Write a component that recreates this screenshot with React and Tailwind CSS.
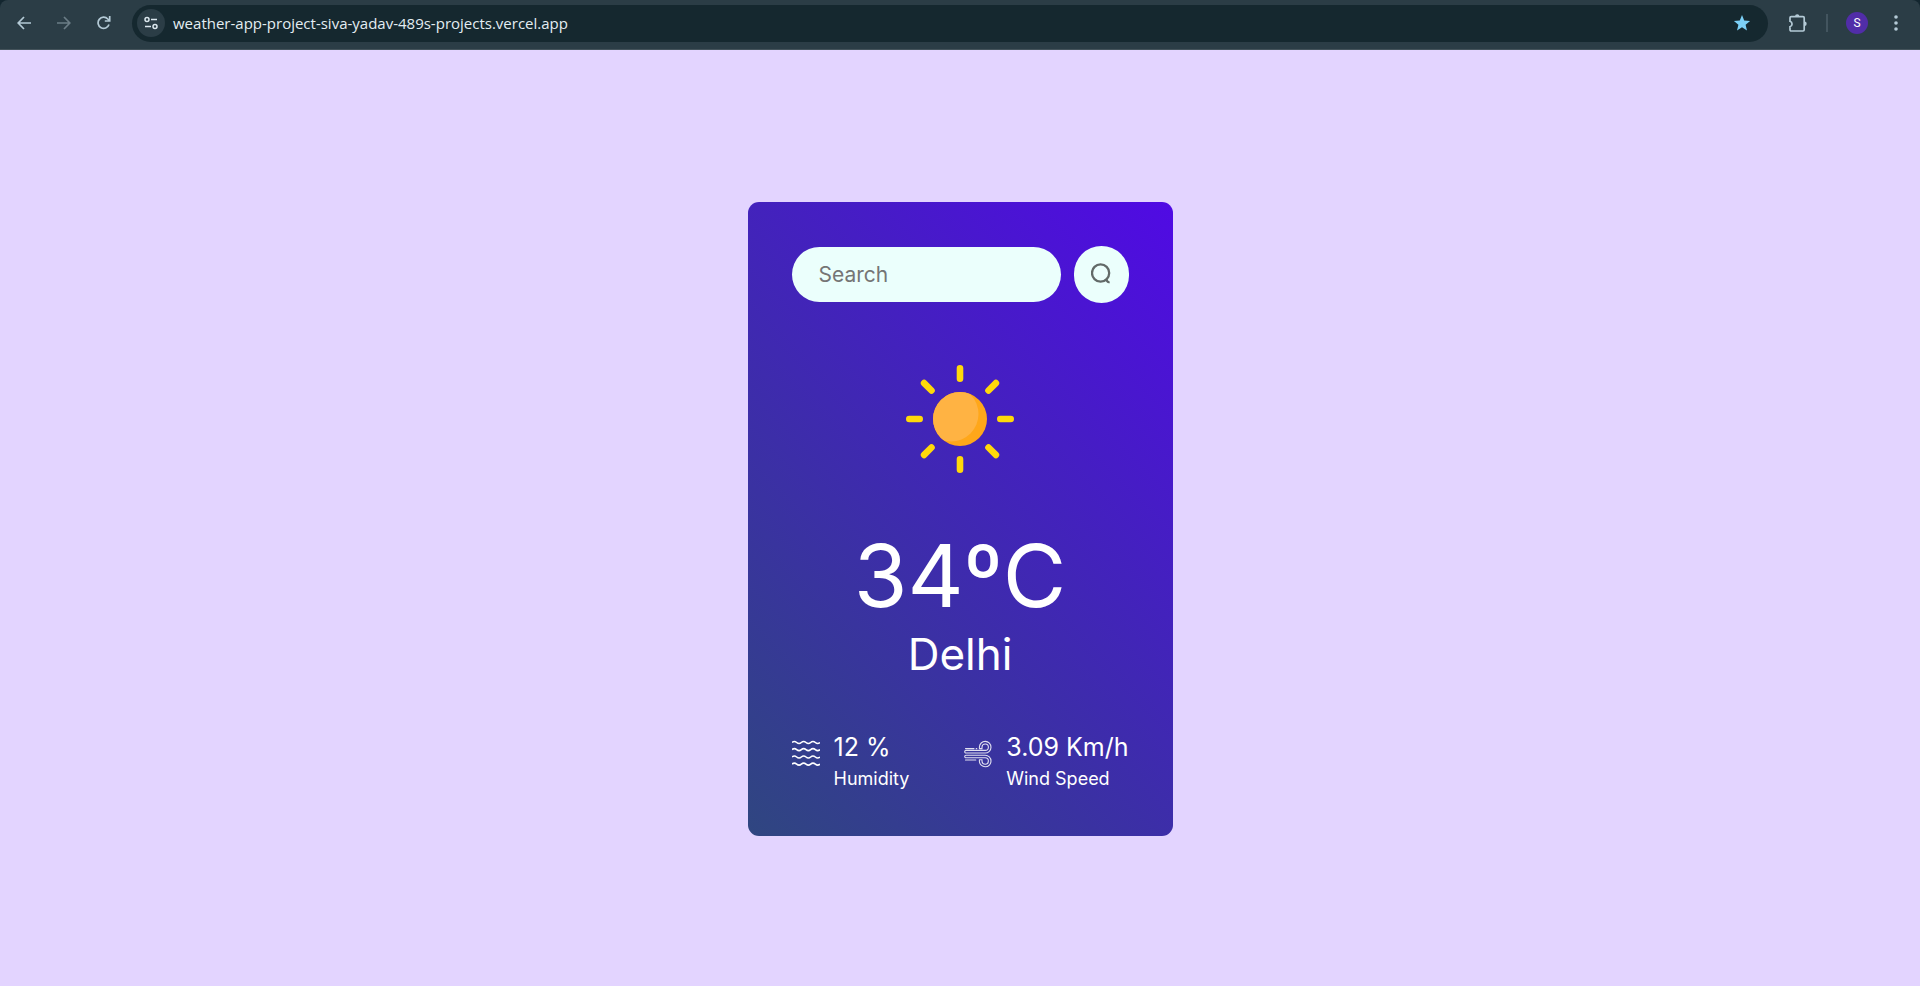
import React from "react";

function BrowserBar() {
  return (
    <div className="bg-[#13262f]">
      <header className="flex h-[50px] items-center rounded-t-lg border-b border-[#44535b] bg-[#2b3d46] pb-[3px] pr-3 pl-3 text-[#b4cad6]">
        <nav className="flex gap-4" aria-label="Navigation">
          <button className="flex size-6 items-center justify-center" aria-label="Back">
            <svg width="14" height="14" viewBox="0 0 14 14" fill="none" stroke="currentColor" strokeWidth="1.7">
              <path d="M14 7H1.4M7 1 1.2 7 7 13" />
            </svg>
          </button>
          <button className="flex size-6 items-center justify-center text-[#6b7d86]" aria-label="Forward">
            <svg width="14" height="14" viewBox="0 0 14 14" fill="none" stroke="currentColor" strokeWidth="1.7">
              <path d="M0 7h12.6M7 1l5.8 6L7 13" />
            </svg>
          </button>
          <button className="flex size-6 items-center justify-center" aria-label="Reload">
            <svg width="14" height="14" viewBox="0 0 14 14" fill="none" stroke="currentColor" strokeWidth="1.7">
              <path d="M12 8.600A5.600 5.600 0 1 1 10.800 3L12.400 4.600M12.700 0v5H7.800" />
            </svg>
          </button>
        </nav>
        <div className="ml-4 flex h-[37px] flex-1 items-center rounded-full bg-[#15282f] pr-4 pl-[5px]">
          <button className="flex size-7 items-center justify-center rounded-full bg-[#2b3d46] text-[#dbe7ee]" aria-label="Site information">
            <svg width="14" height="14" viewBox="0 0 14 14" fill="none" stroke="currentColor" strokeWidth="1.5">
              <circle cx="3" cy="3.5" r="2" />
              <path d="M7 3.5h6M1 10.5h6" />
              <circle cx="11" cy="10.5" r="2" />
            </svg>
          </button>
          <span className="ml-2 flex-1 font-['Open_Sans',sans-serif] text-[15px] text-[#e3edf2]">
            weather-app-project-siva-yadav-489s-projects.vercel.app
          </span>
          <button className="flex size-5 items-center justify-center text-[#7cd0f7]" aria-label="Bookmark">
            <svg width="18" height="18" viewBox="0 0 18 18" fill="currentColor">
              <path d="m9 1 2.2 5.5 5.9.4-4.5 3.8 1.4 5.8-5-3.2-5 3.2 1.4-5.8L.9 6.9l5.9-.4Z" />
            </svg>
          </button>
        </div>
        <button className="ml-5 flex size-5 items-center justify-center" aria-label="Extensions">
          <svg width="20" height="20" viewBox="0 0 20 20">
            <path d="M3.2 3.6H15q1.2 0 1.2 1.2v12q0 1.2-1.2 1.2H3.2Q2 18 2 16.800v-3.100a2.800 2.800 0 0 0 0-5.400V4.800q0-1.200 1.200-1.200Z" fill="none" stroke="currentColor" strokeWidth="1.700" />
            <path d="M7 3.500a2.200 2.200 0 0 1 4.400 0ZM16.500 8.600a2.200 2.200 0 0 1 0 4.400Z" fill="currentColor" />
          </svg>
        </button>
        <span className="ml-[18px] h-[18px] w-[2px] bg-[#43555f]" />
        <button className="ml-[18px] flex size-[22px] items-center justify-center rounded-full bg-[#512da8] font-[Roboto,sans-serif] text-xs text-white" aria-label="Profile">
          S
        </button>
        <button className="ml-4 flex size-6 items-center justify-center" aria-label="Menu">
          <svg width="4" height="16" viewBox="0 0 4 16" fill="currentColor">
            <circle cx="2" cy="2" r="1.800" />
            <circle cx="2" cy="8" r="1.800" />
            <circle cx="2" cy="14" r="1.800" />
          </svg>
        </button>
      </header>
    </div>
  );
}

function SunIcon() {
  return (
    <svg width="132" height="132" viewBox="-66 -66 132 132" role="img" aria-label="Clear sky">
      <defs>
        <clipPath id="sun-disc">
          <circle r="27" />
        </clipPath>
      </defs>
      <g stroke="#ffd90a" strokeWidth="6.600" strokeLinecap="round">
        <path d="M0-50.700v10.400M0 50.700v-10.400M-50.700 0h10.400M50.700 0h-10.400" />
        <path d="m-35.900-35.900 7.400 7.400M35.900-35.900l-7.400 7.400M-35.900 35.900l7.400-7.400M35.900 35.900l-7.400-7.400" />
      </g>
      <circle r="27" fill="#ffa71a" />
      <circle cx="-9" cy="-5" r="27.500" fill="#ffb343" clipPath="url(#sun-disc)" />
    </svg>
  );
}

function HumidityIcon() {
  const wave = "q2.300-2 4.670 0t4.670 0 4.670 0 4.670 0 4.670 0 4.670 0";
  return (
    <svg width="28" height="28" viewBox="0 0 28 28" fill="none" stroke="white" strokeWidth="1.600" aria-hidden="true">
      <path d={"M0 2.500" + wave} />
      <path d={"M0 9.600" + wave} />
      <path d={"M0 17" + wave} />
      <path d={"M0 24.100" + wave} />
    </svg>
  );
}

function WindIcon() {
  return (
    <svg width="28" height="28" viewBox="0 0 28 28" fill="none" stroke="white" strokeOpacity="0.85" strokeWidth="1.100" strokeLinecap="round" aria-hidden="true">
      <path d="M1.500 8.600h8.500M12.200 8.600h.6" />
      <path d="M15.400 8.600V7a5.800 5.800 0 1 1 5.800 6H2M15.400 8.600h2.600V7a3.200 3.200 0 1 1 3.200 3.400H2a1.300 1.300 0 0 0 0 2.600" />
      <path d="M15.400 19.800v1.400a5.800 5.800 0 1 0 5.800-6H2M15.400 19.800h2.600v1.400a3.200 3.200 0 1 0 3.200-3.400H2a1.300 1.300 0 0 1 0-2.600" />
      <path d="M1.500 20h10.300" />
    </svg>
  );
}

function Stat({ icon, value, label }) {
  return (
    <div className="flex items-start gap-[14px]">
      <div className="mt-3">{icon}</div>
      <div>
        <p className="text-[25px] leading-[38px]">{value}</p>
        <p className="text-lg leading-[26px]">{label}</p>
      </div>
    </div>
  );
}

export default function App() {
  return (
    <div className="flex min-h-screen flex-col bg-[#e3d4ff] font-[Inter,sans-serif]">
      <BrowserBar />
      <main className="flex flex-1 items-center justify-center pt-[6px] pb-1">
        <section className="flex w-[425px] flex-col items-center rounded-[11px] bg-[linear-gradient(45deg,#2f4680,#500ae4)] p-11 text-white">
          <form className="flex w-full items-center gap-[13px]" onSubmit={(e) => e.preventDefault()}>
            <input
              type="text"
              placeholder="Search"
              aria-label="Search"
              className="h-[55px] min-w-0 flex-1 rounded-full bg-[#ebfffc] px-[27px] text-[21px] text-[#626262] outline-none placeholder:text-[#757575]"
            />
            <button className="flex h-[57px] w-[55px] items-center justify-center rounded-full bg-[#ebfffc] pb-[2px]" aria-label="Search city">
              <svg width="20" height="21" viewBox="0 0 20 21" fill="none" stroke="#626a68" strokeWidth="2.300">
                <circle cx="9.600" cy="10" r="8.600" />
                <path d="m14.600 16 1.700 2.300q.9 1.100 2.300.8" />
              </svg>
            </button>
          </form>
          <div className="mt-[50px]">
            <SunIcon />
          </div>
          <p className="mt-[39px] text-[87px] leading-[104px]">34ºC</p>
          <p className="text-[44px] leading-[52px]">Delhi</p>
          <div className="mt-12 flex w-full justify-between">
            <Stat icon={<HumidityIcon />} value="12 %" label="Humidity" />
            <Stat icon={<WindIcon />} value="3.09 Km/h" label="Wind Speed" />
          </div>
        </section>
      </main>
    </div>
  );
}
